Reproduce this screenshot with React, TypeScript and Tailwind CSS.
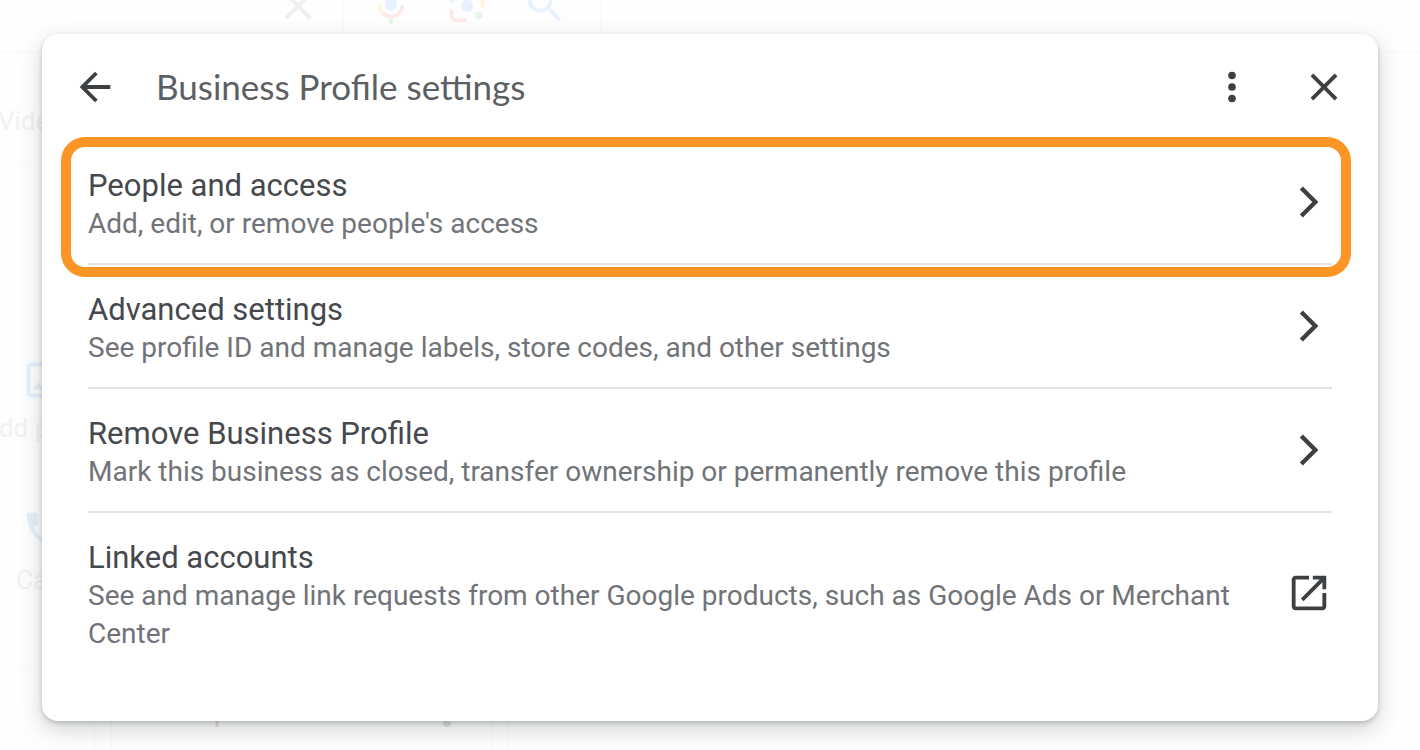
import type { ReactNode } from 'react';

type Row = {
  title: string;
  description: string;
  external?: boolean;
  highlighted?: boolean;
};

const rows: Row[] = [
  {
    title: 'People and access',
    description: "Add, edit, or remove people's access",
    highlighted: true,
  },
  {
    title: 'Advanced settings',
    description: 'See profile ID and manage labels, store codes, and other settings',
  },
  {
    title: 'Remove Business Profile',
    description: 'Mark this business as closed, transfer ownership or permanently remove this profile',
  },
  {
    title: 'Linked accounts',
    description: 'See and manage link requests from other Google products, such as Google Ads or Merchant Center',
    external: true,
  },
];

function Icon({ children, className = 'size-[46px]' }: { children: ReactNode; className?: string }) {
  return (
    <svg viewBox="0 0 24 24" fill="currentColor" aria-hidden="true" className={`shrink-0 ${className}`}>
      {children}
    </svg>
  );
}

const CLOSE_PATH =
  'M19 6.41L17.59 5 12 10.59 6.41 5 5 6.41 10.59 12 5 17.59 6.41 19 12 13.41 17.59 19 19 17.59 13.41 12z';

function SearchPage() {
  return (
    <div aria-hidden="true" className="absolute inset-0 flex flex-col overflow-hidden bg-[#fefefe] text-[26px] text-[#f1f1f1]">
      {/* Search bar */}
      <div className="h-[52px] border-b border-[#f8f8f8]">
        <div className="flex h-[52px] w-[602px] items-start justify-end rounded-br-[24px] border-r-2 border-[#fafafa] pr-8">
          <Icon className="-mt-[17px] mr-[22px] size-[46px] text-[#efefef]">
            <path d={CLOSE_PATH} />
          </Icon>
          <div className="mr-6 h-[52px] w-px bg-[#f8f8f8]" />
          <Icon className="-mt-[18px] mr-[30px] size-[46px]">
            <path fill="#e9f0fe" d="M12 15c1.66 0 3-1.34 3-3V5c0-1.66-1.34-3-3-3S9 3.34 9 5v7c0 1.66 1.34 3 3 3z" />
            <path fill="#e9f5ec" d="M11 18.1h2V22h-2z" />
            <path fill="#fef4dc" d="M7 12H5c0 1.9.8 3.7 2.05 4.95l1.42-1.42C7.56 14.64 7 13.4 7 12z" />
            <path fill="#fdeae8" d="M12 17c-1.38 0-2.63-.56-3.53-1.47l-1.42 1.42C8.32 18.22 10.06 19 12 19c3.87 0 7-3.13 7-7h-2c0 2.76-2.24 5-5 5z" />
          </Icon>
          <Icon className="-mt-[18px] mr-8 size-[46px]">
            <circle cx="12" cy="12.5" r="3.2" fill="#e9f0fe" />
            <circle cx="18.2" cy="17.5" r="2.1" fill="#e9f5ec" />
            <path fill="none" stroke="#fdeae8" strokeWidth="2" d="M4 14.5V17.5A2.5 2.5 0 0 0 6.5 20H12" />
            <path fill="none" stroke="#fef4dc" strokeWidth="2" d="M20 13V6.5A2.5 2.5 0 0 0 17.5 4" />
            <path fill="none" stroke="#e9f0fe" strokeWidth="2" d="M4 11V6.5A2.5 2.5 0 0 1 6.5 4" />
          </Icon>
          <Icon className="-mt-[18px] size-[46px] text-[#e9f0fe]">
            <path d="M15.5 14h-.79l-.28-.27C15.41 12.59 16 11.11 16 9.5 16 5.91 13.09 3 9.5 3S3 5.91 3 9.5 5.91 16 9.5 16c1.61 0 3.09-.59 4.23-1.57l.27.28v.79l5 4.99L20.49 19l-4.99-5zm-6 0C7.01 14 5 11.99 5 9.5S7.01 5 9.5 5 14 7.01 14 9.5 11.99 14 9.5 14z" />
          </Icon>
        </div>
      </div>

      {/* Tabs */}
      <div className="flex h-28 shrink-0 items-center border-b border-[#fafafa] pt-7">
        <span className="-ml-0.5">Videos</span>
      </div>

      {/* Profile shortcuts */}
      <div className="flex h-[503px] shrink-0 flex-col border-b border-[#fafafa] pt-[193px]">
        <Icon className="ml-[21px] size-[46px] text-[#e6effb]">
          <path d="M19 5v14H5V5h14m0-2H5c-1.1 0-2 .9-2 2v14c0 1.1.9 2 2 2h14c1.1 0 2-.9 2-2V5c0-1.1-.9-2-2-2zm-4.86 8.86l-3 3.87L9 13.14 6 17h12l-3.86-5.14z" />
        </Icon>
        <span className="-ml-[18px] mt-1.5 h-[98px]">Add photo</span>
        <Icon className="ml-[21px] size-[46px] text-[#e6effb]">
          <path d="M6.62 10.79c1.44 2.83 3.76 5.14 6.59 6.59l2.2-2.2c.27-.27.67-.36 1.02-.24 1.12.37 2.33.57 3.57.57.55 0 1 .45 1 1V20c0 .55-.45 1-1 1-9.39 0-17-7.61-17-17 0-.55.45-1 1-1h3.5c.55 0 1 .45 1 1 0 1.25.2 2.45.57 3.57.11.35.03.74-.25 1.02l-2.2 2.2z" />
        </Icon>
        <span className="ml-4 mt-2">Calls</span>
      </div>

      {/* Card row under the dialog */}
      <div className="flex min-h-[83px] flex-1 gap-4 pt-4 text-[30px] text-[#dedede]">
        <div className="w-[95px] border-r border-[#f8f8f8]" />
        <div className="flex w-[381px] items-start justify-between border-x border-[#f8f8f8] pl-6 pr-10 pt-2 leading-[40px]">
          <span>Add update</span>
          <span className="mt-7 size-2 rounded-full bg-[#e2e2ea]" />
        </div>
        <div className="flex-1 border-l border-[#f8f8f8]" />
      </div>
    </div>
  );
}

function SettingsRow({ title, description, external, highlighted }: Row) {
  return (
    <li className="relative border-b-2 border-[#e1e2e5] last:border-b-0">
      <button type="button" className="flex w-full cursor-pointer items-center justify-between py-5 text-left">
        <span className="flex max-w-[1150px] flex-col pt-1.5 leading-[38px]">
          <span className="text-[31px] text-[#45484c]">{title}</span>
          <span className="text-[28px] text-[#707478]">{description}</span>
        </span>
        <Icon className="size-[46px] text-[#3c4043]">
          {external ? (
            <path d="M19 19H5V5h7V3H5c-1.11 0-2 .9-2 2v14c0 1.1.89 2 2 2h14c1.1 0 2-.9 2-2v-7h-2v7zM14 3v2h3.59l-9.83 9.83 1.41 1.41L19 6.41V10h2V3h-7z" />
          ) : (
            <path fill="none" stroke="currentColor" strokeWidth="2.3" d="M8 4.7L15.3 12 8 19.3" />
          )}
        </Icon>
      </button>
      {highlighted && (
        <div className="pointer-events-none absolute -bottom-3.5 -left-[27px] -right-[19px] -top-1 rounded-3xl border-[10px] border-[#fd9426]" />
      )}
    </li>
  );
}

export default function App() {
  return (
    <div className="relative min-h-screen overflow-hidden font-['Roboto','Liberation_Sans',sans-serif]">
      <SearchPage />

      <div className="relative px-[42px] pb-[29px] pt-[34px]">
        <section
          role="dialog"
          aria-labelledby="dialog-title"
          className="rounded-2xl bg-white pb-12 shadow-[0_2px_4px_rgba(60,64,67,0.24),0_8px_22px_rgba(60,70,67,0.24)]"
        >
          <header className="flex h-[107px] items-center pb-0.5 pl-[30px] pr-[31px] text-[#3c4043]">
            <button type="button" aria-label="Back" className="cursor-pointer">
              <Icon>
                <path d="M20 11H7.83l5.59-5.59L12 4l-8 8 8 8 1.41-1.41L7.83 13H20v-2z" />
              </Icon>
            </button>
            <h1 id="dialog-title" className="ml-[38px] flex-1 font-['Lato','Liberation_Sans',sans-serif] text-[35px] text-[#5c5f63]">
              Business Profile settings
            </h1>
            <button type="button" aria-label="More options" className="mr-[46px] cursor-pointer">
              <Icon>
                <circle cx="12" cy="6" r="2" />
                <circle cx="12" cy="12" r="2" />
                <circle cx="12" cy="18" r="2" />
              </Icon>
            </button>
            <button type="button" aria-label="Close" className="cursor-pointer">
              <Icon>
                <path d={CLOSE_PATH} />
              </Icon>
            </button>
          </header>

          <ul className="px-[46px]">
            {rows.map((row) => (
              <SettingsRow key={row.title} {...row} />
            ))}
          </ul>
        </section>
      </div>
    </div>
  );
}
